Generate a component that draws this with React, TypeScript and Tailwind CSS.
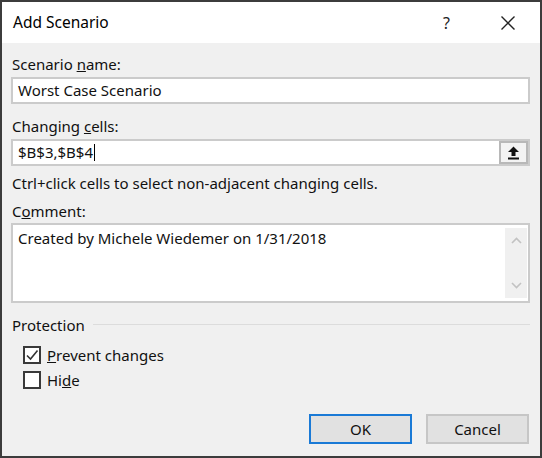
import React from "react";

const font = { fontFamily: '"Noto Sans", "Open Sans", sans-serif' };

function Label({ children, className = "" }: { children: React.ReactNode; className?: string }) {
  return <div className={`h-[20px] leading-[20px] text-[15px] text-[#111] ${className}`}>{children}</div>;
}

function Checkbox({ checked }: { checked: boolean }) {
  return (
    <div className="w-[18px] h-[18px] border-2 border-[#3a3a3a] bg-white flex items-center justify-center">
      {checked && (
        <svg width="14" height="14" viewBox="0 0 14 14">
          <path d="M2 7.5 L5.5 11 L12.5 2.5" fill="none" stroke="#333" strokeWidth="1.6" />
        </svg>
      )}
    </div>
  );
}

export default function App() {
  return (
    <div style={font} className="w-[542px] h-[458px] border-2 border-[#3c3c3c] bg-[#f0f0f0] flex flex-col">
      <div className="h-[41px] bg-white flex items-center pl-[11px] pr-[24px] shrink-0">
        <span className="text-[15.5px] text-black">Add Scenario</span>
        <span className="ml-auto text-[16px] text-[#222]">?</span>
        <svg className="ml-[50px]" width="16" height="16" viewBox="0 0 16 16">
          <path d="M1.5 1.5 L14.5 14.5 M14.5 1.5 L1.5 14.5" stroke="#222" strokeWidth="1.4" />
        </svg>
      </div>
      <div className="flex flex-col pl-[9px] pr-[10px]">
        <Label className="mt-[11px] pl-[1px]">
          Scenario <u>n</u>ame:
        </Label>
        <div className="mt-[3px] h-[27px] border-2 border-[#cbcbcb] bg-white flex items-center pl-[5px] text-[15px] text-[#111]">
          Worst Case Scenario
        </div>
        <Label className="mt-[12px] pl-[1px]">
          Changing <u>c</u>ells:
        </Label>
        <div className="mt-[3px] h-[27px] border-2 border-[#cbcbcb] bg-white flex items-center text-[15px] text-[#111]">
          <span className="pl-[5px]">$B$3,$B$4</span>
          <span className="w-px h-[17px] bg-black ml-[1px]" />
          <div className="ml-auto h-full w-[29px] border-2 border-[#b8b8b8] bg-[#f3f3f3] flex items-center justify-center">
            <svg width="13" height="14" viewBox="0 0 13 14">
              <path d="M6.5 0.5 L12 6 L8.5 6 L8.5 10 L4.5 10 L4.5 6 L1 6 Z" fill="#111" />
              <rect x="1" y="11.5" width="11" height="2" fill="#111" />
            </svg>
          </div>
        </div>
        <Label className="mt-[7px] pl-[1px]">Ctrl+click cells to select non-adjacent changing cells.</Label>
        <Label className="mt-[8px] pl-[1px]">
          C<u>o</u>mment:
        </Label>
        <div className="mt-[2px] h-[80px] border-2 border-[#cbcbcb] bg-white flex text-[15px] text-[#111]">
          <div className="flex-1 pl-[5px] pt-[3px] leading-[20px]">Created by Michele Wiedemer on 1/31/2018</div>
          <div className="w-[22px] my-[3px] mr-[1px] bg-[#f0f0f0] flex flex-col items-center justify-between py-[9px]">
            <svg width="11" height="7" viewBox="0 0 11 7">
              <path d="M1 6 L5.5 1.5 L10 6" fill="none" stroke="#c2c2c2" strokeWidth="1.6" />
            </svg>
            <svg width="11" height="7" viewBox="0 0 11 7">
              <path d="M1 1 L5.5 5.5 L10 1" fill="none" stroke="#c2c2c2" strokeWidth="1.6" />
            </svg>
          </div>
        </div>
        <div className="mt-[12px] h-[20px] flex items-center">
          <span className="pl-[1px] text-[15px] text-[#111] leading-[20px]">Protection</span>
          <div className="flex-1 h-px bg-[#dcdcdc] ml-[8px] mt-[-1px]" />
        </div>
        <div className="mt-[10px] h-[20px] flex items-center pl-[12px] gap-[6px]">
          <Checkbox checked />
          <span className="text-[15px] text-[#111]">
            <u>P</u>revent changes
          </span>
        </div>
        <div className="mt-[5px] h-[20px] flex items-center pl-[12px] gap-[6px]">
          <Checkbox checked={false} />
          <span className="text-[15px] text-[#111]">
            Hi<u>d</u>e
          </span>
        </div>
        <div className="mt-[24px] flex justify-end gap-[14px] pr-[1px]">
          <button className="w-[103px] h-[30px] border-2 border-[#1a7ad6] bg-[#e1e1e1] text-[15px] text-[#111]">OK</button>
          <button className="w-[103px] h-[30px] border-2 border-[#c6c6c6] bg-[#e1e1e1] text-[15px] text-[#111]">Cancel</button>
        </div>
      </div>
    </div>
  );
}
